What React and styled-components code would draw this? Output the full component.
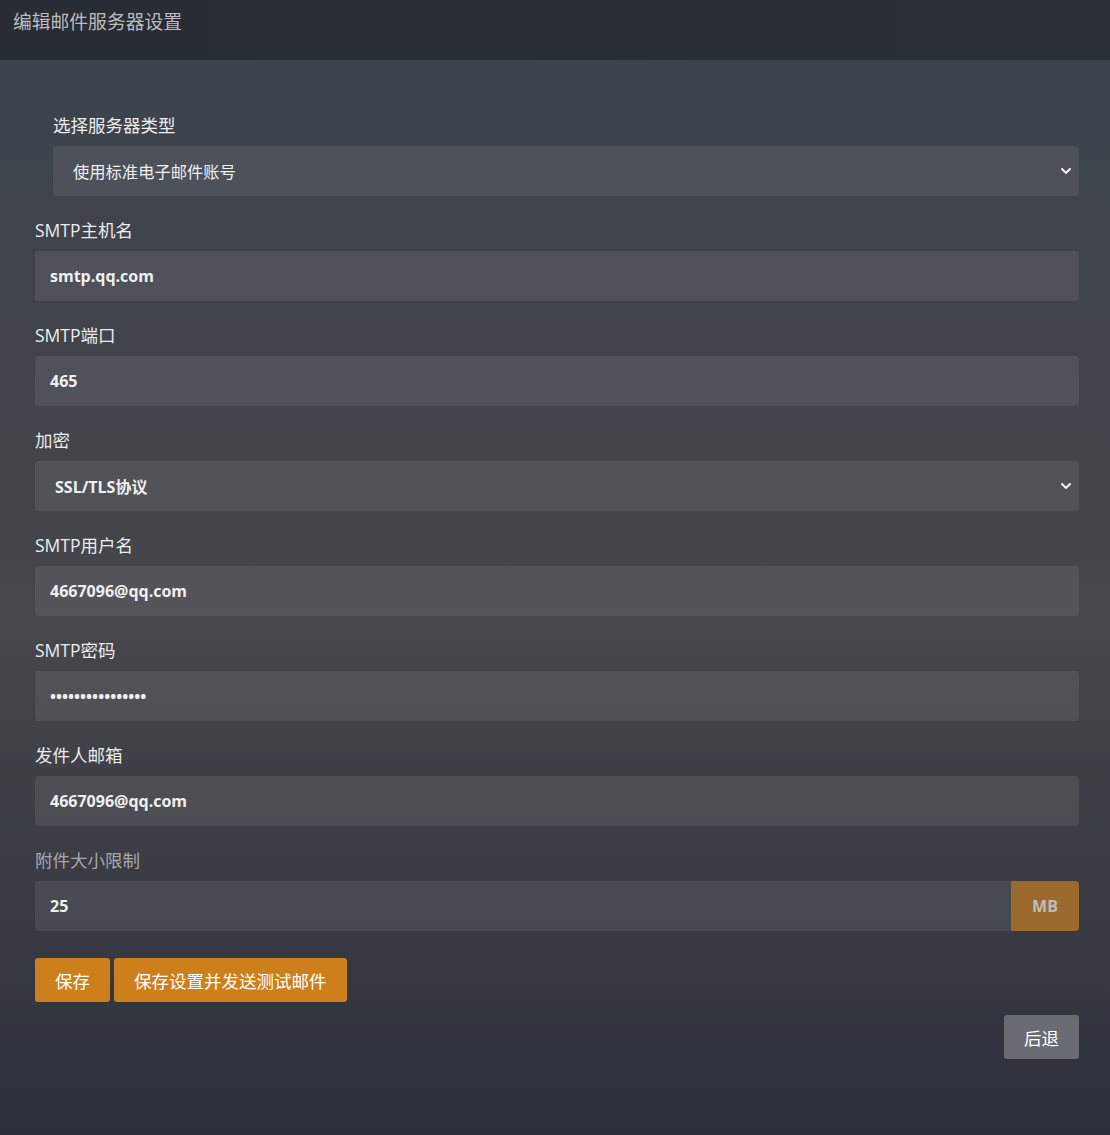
import React from "react";
import styled, { createGlobalStyle } from "styled-components";

const GlobalStyle = createGlobalStyle`
  html, body {
    margin: 0;
    padding: 0;
  }
  body {
    font-family: "Open Sans", "Noto Sans CJK SC", sans-serif;
    background: #2c313b;
  }
`;

const Page = styled.div`
  width: 1110px;
  min-height: 1135px;
  background: linear-gradient(180deg, #3b434d 0%, #41444a 35%, #46464b 55%, #393b43 80%, #2b303b 100%);
`;

const Header = styled.div`
  height: 60px;
  background: linear-gradient(90deg, #282c35 0%, #2a2f38 100%);
  color: #bdbdbd;
  font-size: 18.8px;
  padding: 9px 13px 0;
  box-sizing: border-box;
  line-height: 26px;
`;

const Body = styled.div`
  padding: 53px 31px 40px 35px;
`;

const Field = styled.div`
  margin: 0 0 22px ${(p) => (p.$indent ? "18px" : "0")};
`;

const Label = styled.div`
  font-size: 17.5px;
  line-height: 24px;
  color: ${(p) => (p.$muted ? "#a8a8aa" : "#ececec")};
  margin-bottom: 9px;
`;

const InputBox = styled.input`
  display: block;
  width: 100%;
  box-sizing: border-box;
  height: 50px;
  border: none;
  outline: none;
  border-radius: ${(p) => (p.$joined ? "4px 0 0 4px" : "4px")};
  background: rgba(255, 255, 255, 0.08);
  color: #f0f0f0;
  font-family: "Open Sans", "Noto Sans CJK SC", sans-serif;
  font-weight: 700;
  font-size: 16px;
  padding: 0 15px;
`;

const SelectBox = styled.div`
  height: 50px;
  border-radius: 4px;
  background: rgba(255, 255, 255, 0.08);
  display: flex;
  align-items: center;
  justify-content: space-between;
  padding: 0 7px 0 20px;
  color: #f0f0f0;
  font-size: ${(p) => (p.$light ? "16.3px" : "16px")};
  font-weight: ${(p) => (p.$light ? 400 : 700)};
`;

const Chevron = () => (
  <svg width="12" height="12" viewBox="0 0 12 12">
    <path d="M2 4 L6 8 L10 4" fill="none" stroke="#f5f5f5" strokeWidth="2" strokeLinecap="round" strokeLinejoin="round" />
  </svg>
);

const Group = styled.div`
  display: flex;
`;

const Addon = styled.div`
  width: 68px;
  flex-shrink: 0;
  height: 50px;
  border-radius: 0 4px 4px 0;
  background: #9c6a2c;
  color: #bdbdbd;
  font-weight: 700;
  font-size: 16px;
  display: flex;
  align-items: center;
  justify-content: center;
`;

const Actions = styled.div`
  display: flex;
  gap: 4px;
  margin-top: 27px;
`;

const Button = styled.button`
  height: 44px;
  border: none;
  border-radius: 3px;
  padding: 0 20px;
  font-family: "Open Sans", "Noto Sans CJK SC", sans-serif;
  font-size: 17.5px;
  color: #fff;
  background: ${(p) => (p.$grey ? "#6a6c73" : "#cd7f1c")};
  cursor: pointer;
`;

const Footer = styled.div`
  display: flex;
  justify-content: flex-end;
  margin-top: 13px;
`;

const TextField = ({ label, value, type = "text" }) => (
  <Field>
    <Label>{label}</Label>
    <InputBox type={type} defaultValue={value} />
  </Field>
);

export default function App() {
  return (
    <>
      <GlobalStyle />
      <Page>
        <Header>编辑邮件服务器设置</Header>
        <Body>
          <Field $indent>
            <Label>选择服务器类型</Label>
            <SelectBox $light>
              <span>使用标准电子邮件账号</span>
              <Chevron />
            </SelectBox>
          </Field>
          <TextField label="SMTP主机名" value="smtp.qq.com" />
          <TextField label="SMTP端口" value="465" />
          <Field>
            <Label>加密</Label>
            <SelectBox>
              <span>SSL/TLS协议</span>
              <Chevron />
            </SelectBox>
          </Field>
          <TextField label="SMTP用户名" value="4667096@qq.com" />
          <TextField label="SMTP密码" type="password" value="abcdefghijklmnop" />
          <TextField label="发件人邮箱" value="4667096@qq.com" />
          <Field>
            <Label $muted>附件大小限制</Label>
            <Group>
              <InputBox $joined defaultValue="25" />
              <Addon>MB</Addon>
            </Group>
          </Field>
          <Actions>
            <Button>保存</Button>
            <Button>保存设置并发送测试邮件</Button>
          </Actions>
          <Footer>
            <Button $grey>后退</Button>
          </Footer>
        </Body>
      </Page>
    </>
  );
}
